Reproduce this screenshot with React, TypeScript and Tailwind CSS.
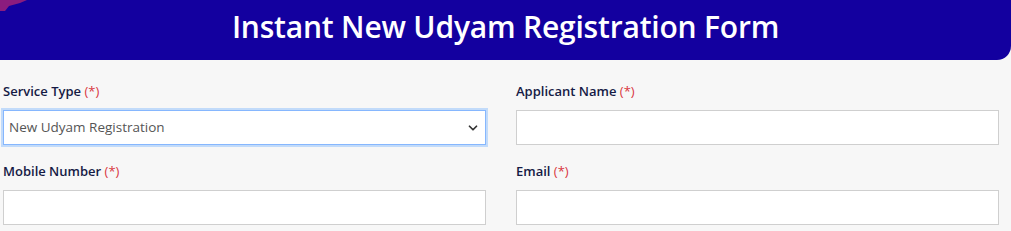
import { ChevronDown } from 'lucide-react';

const fields = [
  { label: 'Service Type', kind: 'select' },
  { label: 'Applicant Name', kind: 'input' },
  { label: 'Mobile Number', kind: 'input' },
  { label: 'Email', kind: 'input' },
];

function Label({ text }: { text: string }) {
  return (
    <label className="block text-[13px] font-semibold leading-[18px] text-[#151a45]">
      {text} <span className="text-[#d9363e] font-normal">(*)</span>
    </label>
  );
}

export default function App() {
  return (
    <div className="h-[231px] overflow-hidden bg-[#f7f7f7] font-['Open_Sans',sans-serif]">
      <div className="relative h-[60px] overflow-hidden rounded-br-[14px] bg-[#13009f] flex items-center justify-center">
        <svg className="absolute left-0 top-0" width="30" height="12" viewBox="0 0 30 12">
          <polygon points="0,0 27,0 20,3 9,6 5,11 0,11" fill="#8b1c7e" />
        </svg>
        <h1 className="text-[30px] font-semibold text-white leading-none tracking-[-0.2px] pb-[6px]">
          Instant New Udyam Registration Form
        </h1>
      </div>

      <div className="grid grid-cols-2 gap-x-[30px] pl-[3px] pr-[12px] pt-[22px]">
        {fields.map((f) => (
          <div key={f.label} className="h-[80px]">
            <Label text={f.label} />
            <div className="mt-[10px]">
              {f.kind === 'select' ? (
                <div className="relative h-[35px] border border-[#86b7fe] bg-white outline outline-[2px] outline-[#c2dbfa] flex items-center px-[5px]">
                  <span className="text-[13.5px] text-[#555]">New Udyam Registration</span>
                  <ChevronDown className="absolute right-[5px] top-[10px] h-[14px] w-[14px] text-[#333]" strokeWidth={3} />
                </div>
              ) : (
                <div className="h-[35px] border border-[#cfcfcf] bg-white" />
              )}
            </div>
          </div>
        ))}
      </div>
    </div>
  );
}
